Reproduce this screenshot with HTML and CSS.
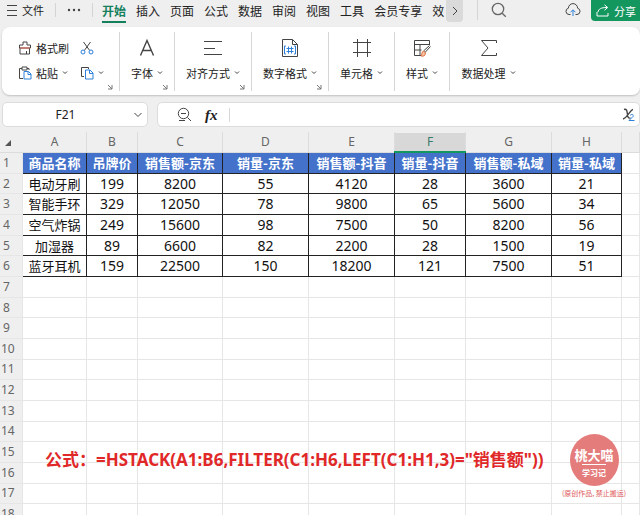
FILE: index.html
```
<!DOCTYPE html>
<html lang="zh-CN">
<head>
  <meta charset="UTF-8">
  <title>表格</title>
  <link rel="stylesheet" href="styles.css">
</head>
<body>
  <!-- Menu bar -->
  <header class="menubar">
    <button class="file-btn" type="button">
      <svg width="12" height="12" viewBox="0 0 12 12"><path d="M1 1.5h10M1 6.5h10M1 11.5h10"/></svg>
      文件
    </button>
    <button class="more-btn" type="button" aria-label="更多">
      <svg width="14" height="4" viewBox="0 0 14 4"><circle cx="2" cy="2" r="1.2"/><circle cx="7" cy="2" r="1.2"/><circle cx="12" cy="2" r="1.2"/></svg>
    </button>
    <nav class="tabs">
      <a class="tab active" href="#">开始</a>
      <a class="tab" href="#">插入</a>
      <a class="tab" href="#">页面</a>
      <a class="tab" href="#">公式</a>
      <a class="tab" href="#">数据</a>
      <a class="tab" href="#">审阅</a>
      <a class="tab" href="#">视图</a>
      <a class="tab" href="#">工具</a>
      <a class="tab" href="#">会员专享</a>
      <a class="tab" href="#">效</a>
    </nav>
    <button class="scroll-btn" type="button" aria-label="向右滚动">
      <svg width="6" height="10" viewBox="0 0 6 10"><path d="M1 1l4 4-4 4"/></svg>
    </button>
    <button class="search-btn" type="button" aria-label="搜索">
      <svg width="16" height="16" viewBox="0 0 16 16"><circle cx="7" cy="7" r="5.7"/><path d="M11.2 11.2l3.6 3.6"/></svg>
    </button>
    <button class="cloud-btn" type="button" aria-label="云同步">
      <svg width="16" height="14" viewBox="0 0 16 14"><path d="M5.5 11.5H4A3.2 3.2 0 0 1 3.4 5.2a4.6 4.6 0 0 1 9.2 0A3.2 3.2 0 0 1 12 11.5h-1.5"/><path class="blue" d="M8 13V7M5.5 9.3L8 6.8l2.5 2.5"/></svg>
    </button>
    <button class="share-btn" type="button">
      <svg width="14" height="13" viewBox="0 0 14 13"><path d="M1 8v4h11V9M2 8c.5-3 3-4.5 9-4.5M8.5.8l3.2 2.7-3.2 2.7"/></svg>
      分享
    </button>
  </header>

  <!-- Ribbon -->
  <section class="ribbon">
    <div class="group clipboard">
      <button class="tool" type="button">
        <svg width="14" height="14" viewBox="0 0 14 14"><path d="M5 4V1h4v3h3.5v3h-11V4zM2 7v6h9.5V7M8.5 13v-3"/><path class="red" d="M2 7h10"/></svg>
        格式刷
      </button>
      <button class="tool" type="button" aria-label="剪切">
        <svg width="14" height="14" viewBox="0 0 14 14"><path d="M3.5 1l6.2 8.5M10.5 1L4.3 9.5"/><circle class="blue" cx="3" cy="11" r="2"/><circle class="blue" cx="11" cy="11" r="2"/></svg>
      </button>
      <button class="tool" type="button">
        <svg width="14" height="14" viewBox="0 0 14 14"><path d="M4 2.5H1.5v10H5M9 2.5h2V4M4 1h5v3H4z"/><path class="blue" d="M6 5.5h4.5l2.5 2.5v5H6zM10 5.5v3h3"/></svg>
        粘贴
        <svg class="caret" width="6" height="4" viewBox="0 0 6 4"><path d="M1 .5l2 2 2-2"/></svg>
      </button>
      <button class="tool" type="button" aria-label="复制">
        <svg width="14" height="14" viewBox="0 0 14 14"><path d="M4 10.5H1.5v-9h7V3"/><path class="blue" d="M5.5 4H10l3 3v6H5.5zM9.5 4v3.5H13"/></svg>
        <svg class="caret" width="6" height="4" viewBox="0 0 6 4"><path d="M1 .5l2 2 2-2"/></svg>
      </button>
      <svg class="corner" width="6" height="6" viewBox="0 0 6 6"><path d="M1 1l4 4M5 1v4H1"/></svg>
    </div>
    <button class="group font" type="button">
      <svg width="18" height="18" viewBox="0 0 18 18"><path class="thick" d="M2.500 16.500L9 1.500l6.500 15M4.800 11.500h8.400"/></svg>
      <span class="label">字体 <svg class="caret" width="6" height="4" viewBox="0 0 6 4"><path d="M1 .5l2 2 2-2"/></svg></span>
      <svg class="corner" width="6" height="6" viewBox="0 0 6 6"><path d="M1 1l4 4M5 1v4H1"/></svg>
    </button>
    <button class="group wide" type="button">
      <svg width="18" height="18" viewBox="0 0 18 18"><path d="M0 2.500h18M0 9.500h11M0 15.500h18"/></svg>
      <span class="label">对齐方式 <svg class="caret" width="6" height="4" viewBox="0 0 6 4"><path d="M1 .5l2 2 2-2"/></svg></span>
      <svg class="corner" width="6" height="6" viewBox="0 0 6 6"><path d="M1 1l4 4M5 1v4H1"/></svg>
    </button>
    <button class="group wide" type="button">
      <svg width="18" height="18" viewBox="0 0 18 18"><path d="M1.5.5h10l5 5v12h-15zM11.5.5v5h5"/><path class="blue" d="M5 7H3.500v8H5M13 7h1.500v8H13M7.500 7.500v7M10.500 7.500v7M5.500 9.500h7M5.500 12.500h7"/></svg>
      <span class="label">数字格式 <svg class="caret" width="6" height="4" viewBox="0 0 6 4"><path d="M1 .5l2 2 2-2"/></svg></span>
      <svg class="corner" width="6" height="6" viewBox="0 0 6 6"><path d="M1 1l4 4M5 1v4H1"/></svg>
    </button>
    <button class="group cells" type="button">
      <svg width="18" height="18" viewBox="0 0 18 18"><path d="M4.500 0v18M14.500 0v18M0 3.500h18M0 13.500h18"/></svg>
      <span class="label">单元格 <svg class="caret" width="6" height="4" viewBox="0 0 6 4"><path d="M1 .5l2 2 2-2"/></svg></span>
    </button>
    <button class="group style" type="button">
      <svg width="18" height="18" viewBox="0 0 18 18"><path d="M8 16.500H1.500v-15h15V6M1.500 5.500h15M1.500 11h7M7 5.500v11"/><path d="M17.500 7.500l-5.500 6-1.500-1.500 6-5.500"/><path class="orange" d="M10.500 12l2 2c0 3-2.500 3.500-4.500 3 1-1 .5-4.500 2.500-5z"/></svg>
      <span class="label">样式 <svg class="caret" width="6" height="4" viewBox="0 0 6 4"><path d="M1 .5l2 2 2-2"/></svg></span>
    </button>
    <button class="group wide" type="button">
      <svg width="18" height="18" viewBox="0 0 18 18"><path d="M16.500 4V1.500H1.500L8 9l-6.500 7.500h15V14"/></svg>
      <span class="label">数据处理 <svg class="caret" width="6" height="4" viewBox="0 0 6 4"><path d="M1 .5l2 2 2-2"/></svg></span>
    </button>
  </section>

  <!-- Name box and formula input -->
  <section class="formula-bar">
    <div class="name-box">
      <input class="name-input" type="text" value="F21" aria-label="名称框">
      <button type="button" aria-label="展开名称框">
        <svg width="8" height="6" viewBox="0 0 8 6"><path d="M.5 1L4 4.500 7.500 1"/></svg>
      </button>
    </div>
    <div class="formula-box">
      <button type="button" aria-label="缩小">
        <svg width="15" height="15" viewBox="0 0 15 15"><circle cx="6.500" cy="6.500" r="5.200"/><path d="M4 6.500h5M10.500 10.500l3.500 3.500M2 13.500h6"/></svg>
      </button>
      <button class="fx" type="button">fx</button>
      <input class="formula-input" type="text" aria-label="编辑栏">
      <button class="edit-btn" type="button" aria-label="公式编辑">
        <svg width="14" height="14" viewBox="0 0 14 14"><path class="thick" d="M2 1.500c3-1 3 2 3.500 5s1 4 3 3.500M11 1.500C8 2 5 10.500 1 11"/><path class="blue" d="M8 7.500c2-2 4-1 3 1L7 12.500h5.500"/></svg>
      </button>
    </div>
  </section>

  <!-- Worksheet -->
  <main class="sheet">
    <table class="grid">
      <colgroup>
        <col class="c-num"><col class="c-a"><col class="c-b"><col class="c-c"><col class="c-d">
        <col class="c-d"><col class="c-f"><col class="c-d"><col class="c-h"><col>
      </colgroup>
      <thead>
        <tr><th><svg width="6" height="6" viewBox="0 0 7 7"><path d="M7 0v7H0z"/></svg></th><th>A</th><th>B</th><th>C</th><th>D</th><th>E</th><th class="current">F</th><th>G</th><th>H</th><th></th></tr>
      </thead>
      <tbody class="data">
        <tr class="title"><th>1</th><td>商品名称</td><td>吊牌价</td><td>销售额-京东</td><td>销量-京东</td><td>销售额-抖音</td><td>销量-抖音</td><td>销售额-私域</td><td>销量-私域</td><td></td></tr>
        <tr><th>2</th><td>电动牙刷</td><td>199</td><td>8200</td><td>55</td><td>4120</td><td>28</td><td>3600</td><td>21</td><td></td></tr>
        <tr><th>3</th><td>智能手环</td><td>329</td><td>12050</td><td>78</td><td>9800</td><td>65</td><td>5600</td><td>34</td><td></td></tr>
        <tr><th>4</th><td>空气炸锅</td><td>249</td><td>15600</td><td>98</td><td>7500</td><td>50</td><td>8200</td><td>56</td><td></td></tr>
        <tr><th>5</th><td>加湿器</td><td>89</td><td>6600</td><td>82</td><td>2200</td><td>28</td><td>1500</td><td>19</td><td></td></tr>
        <tr><th>6</th><td>蓝牙耳机</td><td>159</td><td>22500</td><td>150</td><td>18200</td><td>121</td><td>7500</td><td>51</td><td></td></tr>
      </tbody>
      <tbody>
        <tr><th>7</th><td></td><td></td><td></td><td></td><td></td><td></td><td></td><td></td><td></td></tr>
        <tr><th>8</th><td></td><td></td><td></td><td></td><td></td><td></td><td></td><td></td><td></td></tr>
        <tr><th>9</th><td></td><td></td><td></td><td></td><td></td><td></td><td></td><td></td><td></td></tr>
        <tr><th>10</th><td></td><td></td><td></td><td></td><td></td><td></td><td></td><td></td><td></td></tr>
        <tr><th>11</th><td></td><td></td><td></td><td></td><td></td><td></td><td></td><td></td><td></td></tr>
        <tr><th>12</th><td></td><td></td><td></td><td></td><td></td><td></td><td></td><td></td><td></td></tr>
        <tr><th>13</th><td></td><td></td><td></td><td></td><td></td><td></td><td></td><td></td><td></td></tr>
        <tr><th>14</th><td></td><td></td><td></td><td></td><td></td><td></td><td></td><td></td><td></td></tr>
        <tr><th>15</th><td></td><td></td><td></td><td></td><td></td><td></td><td></td><td></td><td></td></tr>
        <tr><th>16</th><td></td><td></td><td></td><td></td><td></td><td></td><td></td><td></td><td></td></tr>
        <tr><th>17</th><td></td><td></td><td></td><td></td><td></td><td></td><td></td><td></td><td></td></tr>
        <tr><th>18</th><td></td><td></td><td></td><td></td><td></td><td></td><td></td><td></td><td></td></tr>
      </tbody>
    </table>
    <p class="formula-note">公式：=HSTACK(A1:B6,FILTER(C1:H6,LEFT(C1:H1,3)="销售额"))</p>
    <div class="stamp">
      <div class="stamp-circle">
        <span class="stamp-name">桃大喵</span>
        <span class="stamp-sub">学习记</span>
      </div>
      <span class="stamp-note">(原创作品, 禁止搬运)</span>
    </div>
  </main>
</body>
</html>
```
FILE: styles.css
```
* {
  box-sizing: border-box;
}

body {
  margin: 0;
  height: 100vh;
  display: flex;
  flex-direction: column;
  overflow: hidden;
  background-color: #efefef;
  color: #222;
  font-family: "Noto Sans CJK SC", sans-serif;
  font-size: 11px;
  line-height: 16px;
}

button,
input {
  font: inherit;
  color: inherit;
  background: none;
  border: none;
  padding: 0;
  margin: 0;
  outline: none;
}

button {
  display: flex;
  align-items: center;
}

svg {
  flex: none;
  fill: none;
  stroke: #444;
}

svg .blue { stroke: #2f80d8; }
svg .red { stroke: #e0604c; }
svg .orange { stroke: #e0703c; fill: #f6c3a5; }
svg .thick { stroke-width: 1.4; }

/* Menu bar */
.menubar {
  display: flex;
  height: 27px;
  padding-left: 6px;
}

.file-btn {
  gap: 4px;
  width: 49px;
  height: 20px;
}

.more-btn {
  justify-content: center;
  width: 38px;
  height: 14px;
  margin-top: 3px;
  border-left: 1px solid #d4d4d4;
  border-right: 1px solid #d4d4d4;
}

.more-btn svg {
  fill: #444;
  stroke: none;
}

.tabs {
  display: flex;
  gap: 10px;
  padding-left: 9px;
  font-size: 12px;
}

.tab {
  height: 23px;
  padding-top: 3px;
  color: #222;
  text-decoration: none;
  white-space: nowrap;
}

.tab.active {
  color: #14805c;
  font-weight: bold;
  border-bottom: 2px solid #14805c;
}

.scroll-btn {
  justify-content: center;
  width: 17px;
  height: 22px;
  margin-left: 2px;
  background-color: #dadada;
  border-radius: 0 0 4px 4px;
}

.search-btn {
  height: 20px;
  margin-left: 14px;
  padding-left: 13px;
  border-left: 1px solid #d4d4d4;
}

.search-btn svg {
  stroke: #666;
  stroke-width: 1.3;
}

.cloud-btn {
  height: 20px;
  margin-left: auto;
  margin-right: 10px;
}

.share-btn {
  gap: 4px;
  width: 49px;
  height: 21px;
  padding-left: 5px;
  background-color: #14965f;
  color: #fff;
  border-radius: 0 0 0 4px;
  white-space: nowrap;
}

.share-btn svg {
  stroke: #fff;
}

/* Ribbon */
.ribbon {
  display: flex;
  height: 68px;
  margin-left: 2px;
  padding: 5px 0 4px;
  background-color: #fff;
  border-radius: 8px;
  box-shadow: 0 1px 2px rgba(0, 0, 0, 0.2);
}

.group {
  position: relative;
  display: flex;
  flex-direction: column;
  align-items: center;
  gap: 8px;
  padding-top: 7px;
  white-space: nowrap;
  border-right: 1px solid #d6d6d6;
}

.group:last-child {
  border-right: none;
}

.clipboard {
  display: grid;
  grid-template-columns: 56px 24px;
  grid-template-rows: 16px 16px;
  gap: 9px 6px;
  align-items: center;
  width: 118px;
  padding-left: 16px;
  padding-top: 8px;
}

.tool {
  gap: 4px;
}

.font,
.style {
  width: 55px;
}

.wide {
  width: 77px;
}

.cells {
  width: 66px;
}

.label {
  display: flex;
  align-items: center;
  gap: 4px;
}

.corner {
  position: absolute;
  right: 6px;
  bottom: 1px;
  stroke: #777;
}

/* Formula bar */
.formula-bar {
  display: flex;
  gap: 9px;
  padding: 7px 0 5px 2px;
}

.name-box,
.formula-box {
  display: flex;
  align-items: center;
  height: 25px;
  background-color: #fff;
  border: 1px solid #dcdcdc;
  border-radius: 5px;
}

.name-box {
  width: 146px;
  padding-right: 5px;
}

.name-input {
  flex: 1;
  min-width: 0;
  padding-right: 6px;
  text-align: center;
  font-family: "Noto Sans", sans-serif;
  font-size: 12px;
}

.formula-box {
  flex: 1;
  padding: 0 3px 0 19px;
}

.fx {
  margin-left: 13px;
  font-family: "Liberation Serif", serif;
  font-size: 15px;
  font-style: italic;
  font-weight: bold;
}

.formula-input {
  flex: 1;
  min-width: 0;
  height: 14px;
  margin-left: 11px;
  border-left: 1px solid #d8d8d8;
}

/* Worksheet */
.sheet {
  position: relative;
  flex: 1;
  overflow: hidden;
  background-color: #fff;
}

.grid {
  width: 100%;
  height: 393px;
  table-layout: fixed;
  border-collapse: collapse;
}

.c-num { width: 22px; }
.c-a { width: 64px; }
.c-b { width: 51px; }
.c-c { width: 85px; }
.c-d { width: 86px; }
.c-f { width: 71px; }
.c-h { width: 70px; }

.grid th,
.grid td {
  padding: 0;
  border: 1px solid #e6e6e6;
  text-align: center;
  line-height: 18px;
  white-space: nowrap;
}

.grid th {
  background-color: #efefef;
  color: #666;
  font-family: "Noto Sans", sans-serif;
  font-size: 12px;
  font-weight: normal;
}

.grid tbody th {
  padding-right: 10px;
}

.grid thead th {
  border-color: #dcdcdc;
  border-top-color: #efefef;
}

.grid tr th:first-child {
  border-left-color: #efefef;
}

.grid thead th:first-child {
  border-right-color: #efefef;
  padding-right: 8px;
}

.grid thead svg {
  fill: #555;
  stroke: none;
}

.grid th.current {
  background-color: #d8d8d8;
  color: #3a7a6a;
  border-bottom: 2px solid #14965f;
}

.data td {
  color: #111;
  font-family: "Noto Sans", "Noto Sans CJK SC", sans-serif;
  font-size: 14px;
}

.data td:not(:last-child) {
  border-color: #222;
}

.data tr:not(.title) td:nth-child(2) {
  font-size: 13px;
}

.data .title td {
  color: #fff;
  font-family: "Noto Sans CJK SC", sans-serif;
  font-size: 13px;
  font-weight: bold;
}

.data .title td:not(:last-child) {
  background-color: #4472cb;
}

/* Notes lying over the cells */
.formula-note {
  position: absolute;
  left: 45px;
  top: 316px;
  margin: 0;
  color: #e02828;
  font-family: "Noto Sans", "Noto Sans CJK SC", sans-serif;
  font-size: 17px;
  font-weight: bold;
  line-height: 24px;
  white-space: nowrap;
}

.stamp {
  position: absolute;
  left: 558px;
  top: 302px;
  width: 72px;
  display: flex;
  flex-direction: column;
  align-items: center;
  color: #e05a5a;
}

.stamp-circle {
  display: flex;
  flex-direction: column;
  align-items: center;
  width: 49px;
  height: 52px;
  padding-top: 12px;
  background-color: #e57c7c;
  border-radius: 50%;
  color: #fff;
  font-weight: bold;
}

.stamp-name {
  font-size: 13px;
  line-height: 18px;
}

.stamp-sub {
  border-top: 1px solid #fff;
  font-size: 8px;
  line-height: 16px;
}

.stamp-note {
  font-size: 7px;
  line-height: 14px;
  white-space: nowrap;
}
```
